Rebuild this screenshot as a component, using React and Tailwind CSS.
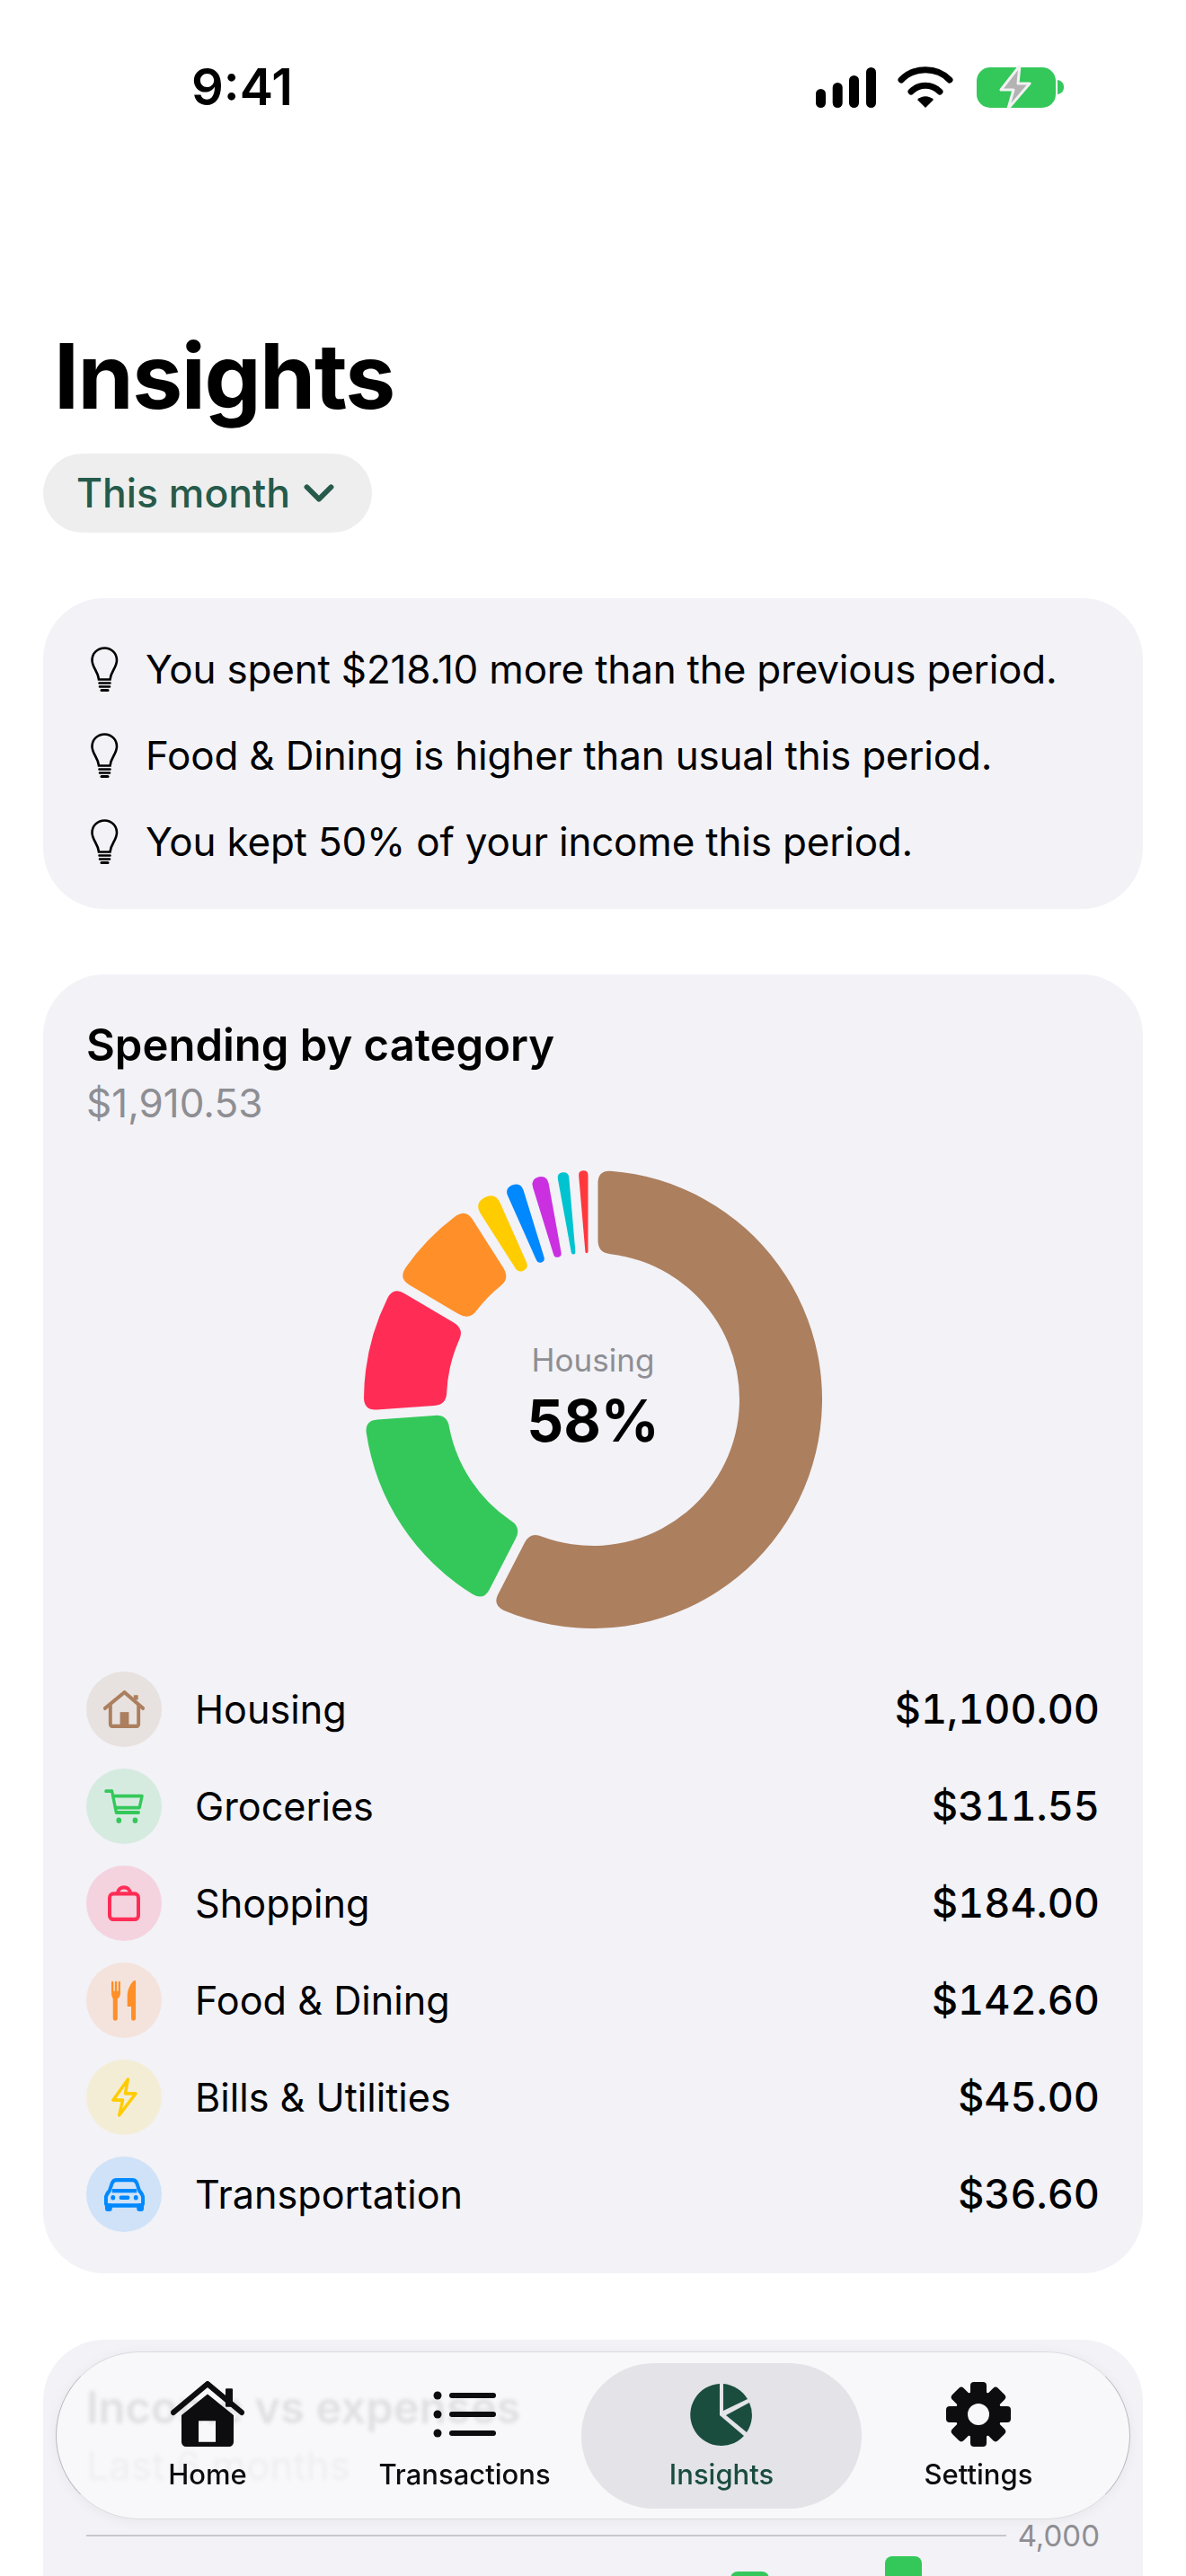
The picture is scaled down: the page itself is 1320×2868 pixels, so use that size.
import React from 'react';
import { ChevronDown } from 'lucide-react';

const font = { fontFamily: 'Inter, "Liberation Sans", sans-serif' };

// clockwise degrees from the top, one slice per category
const slices = [
  { color: '#ac7f5e', value: 1100 },
  { color: '#34c85a', value: 311.55 },
  { color: '#ff2d55', value: 184 },
  { color: '#ff8f28', value: 142.6 },
  { color: '#ffcc00', value: 45 },
  { color: '#0088ff', value: 36.6 },
  { color: '#cb30e0', value: 36 },
  { color: '#00c3d0', value: 28.78 },
  { color: '#ff383c', value: 26 },
];

const categories = [
  { name: 'Housing', amount: '$1,100.00', bg: '#e7e2df', color: '#ac7f5e', icon: 'house' },
  { name: 'Groceries', amount: '$311.55', bg: '#d6ebe0', color: '#34c85a', icon: 'cart' },
  { name: 'Shopping', amount: '$184.00', bg: '#f4d3df', color: '#ff2d55', icon: 'bag' },
  { name: 'Food & Dining', amount: '$142.60', bg: '#f4e3dc', color: '#ff8f28', icon: 'fork' },
  { name: 'Bills & Utilities', amount: '$45.00', bg: '#f4edd6', color: '#ffcc00', icon: 'bolt' },
  { name: 'Transportation', amount: '$36.60', bg: '#cfe2f7', color: '#0088ff', icon: 'car' },
];

const tips = [
  'You spent $218.10 more than the previous period.',
  'Food & Dining is higher than usual this period.',
  'You kept 50% of your income this period.',
];

const R = 255;
const r = 163;
const C = 255;
const GAP = 11;

function pt(rad, deg) {
  const a = (deg * Math.PI) / 180;
  return [C + rad * Math.sin(a), C - rad * Math.cos(a)];
}
const f = (p) => p[0].toFixed(2) + ' ' + p[1].toFixed(2);

function slicePath(a0, a1) {
  const off = (rad) => (Math.asin(GAP / 2 / rad) * 180) / Math.PI;
  const o0 = a0 + off(R);
  const o1 = a1 - off(R);
  const i0 = a0 + off(r);
  const i1 = a1 - off(r);
  const widthOut = ((o1 - o0) * Math.PI * R) / 180;
  const widthIn = ((i1 - i0) * Math.PI * r) / 180;
  const cO = Math.min(14, widthOut / 2);
  const cI = Math.min(14, widthIn / 2);
  const dO = ((cO / R) * 180) / Math.PI;
  const dI = ((cI / r) * 180) / Math.PI;
  const big0 = o1 - o0 - 2 * dO > 180 ? 1 : 0;
  const big1 = i1 - i0 - 2 * dI > 180 ? 1 : 0;
  return [
    'M' + f(pt(R, o0 + dO)),
    `A${R} ${R} 0 ${big0} 1 ` + f(pt(R, o1 - dO)),
    'Q' + f(pt(R, o1)) + ' ' + f(pt(R - cO, a1 - off(R - cO))),
    'L' + f(pt(r + cI, a1 - off(r + cI))),
    'Q' + f(pt(r, i1)) + ' ' + f(pt(r, i1 - dI)),
    `A${r} ${r} 0 ${big1} 0 ` + f(pt(r, i0 + dI)),
    'Q' + f(pt(r, i0)) + ' ' + f(pt(r + cI, a0 + off(r + cI))),
    'L' + f(pt(R - cO, a0 + off(R - cO))),
    'Q' + f(pt(R, o0)) + ' ' + f(pt(R, o0 + dO)),
    'Z',
  ].join(' ');
}

function Donut() {
  const total = slices.reduce((s, x) => s + x.value, 0);
  let at = 0;
  return (
    <svg width="510" height="510" viewBox="0 0 510 510">
      {slices.map((s) => {
        const a0 = at;
        at += (s.value / total) * 360;
        return <path key={s.color} d={slicePath(a0, at)} fill={s.color} />;
      })}
    </svg>
  );
}

function Bulb() {
  return (
    <svg width="31" height="50" viewBox="0 0 31 50" fill="none" stroke="#000" strokeWidth="2.6" strokeLinecap="round" className="shrink-0">
      <path d="M15.500 1.500C7.500 1.500 1.500 7.500 1.500 15c0 4 1.500 7 3.500 10.500 2 3.500 3.500 7 4 11h12.500c.5-4 2-7.500 4-11 2-3.500 3.500-6.500 3.500-10.500 0-7.500-6-13.500-13.500-13.500z" />
      <path d="M9.500 40.500h12M10 44.500h11" />
      <path d="M12 48.500h7" strokeWidth="3" />
    </svg>
  );
}

function CategoryIcon({ type, color }) {
  if (type === 'house')
    return (
      <svg width="47" height="42" viewBox="0 0 48 40" preserveAspectRatio="none" fill="none" stroke={color} strokeWidth="4" strokeLinecap="round" strokeLinejoin="round">
        <path d="M2 19 24 2l21 17" />
        <path d="M8 16v20a2 2 0 0 0 2 2h28a2 2 0 0 0 2-2V16" />
        <path d="M37 10V5" strokeWidth="5" strokeLinecap="butt" />
        <rect x="19" y="23" width="10" height="15" fill={color} stroke="none" />
      </svg>
    );
  if (type === 'cart')
    return (
      <svg width="44" height="39" viewBox="0 0 46 36" preserveAspectRatio="none" fill="none" stroke={color} strokeWidth="3.5" strokeLinecap="round" strokeLinejoin="round">
        <path d="M2 2h7l5 22h26" />
        <path d="M10 7h34l-3 12H13" />
        <circle cx="17" cy="32" r="3" fill={color} stroke="none" />
        <circle cx="36" cy="32" r="3" fill={color} stroke="none" />
      </svg>
    );
  if (type === 'bag')
    return (
      <svg width="36" height="40" viewBox="0 0 36 38" preserveAspectRatio="none" fill="none" stroke={color} strokeWidth="4" strokeLinejoin="round">
        <rect x="2" y="9" width="32" height="27" rx="4" />
        <path d="M11 9c0-9 14-9 14 0" />
      </svg>
    );
  if (type === 'fork')
    return (
      <svg width="28" height="45" viewBox="0 0 30 42" preserveAspectRatio="none" fill={color}>
        <path d="M0 2a1.2 1.2 0 0 1 2.5 0v9h1.6V2a1.2 1.2 0 0 1 2.5 0v9h1.6V2a1.2 1.2 0 0 1 2.5 0v11c0 3-1.500 5-3.400 6v20a2.700 2.700 0 0 1-5.400 0V19C1.500 18 0 16 0 13z" />
        <path d="M29 1v38a2.700 2.700 0 0 1-5.400 0V27H19V16C19 9 23 3 27 0c1-.6 2 0 2 1z" />
      </svg>
    );
  if (type === 'bolt')
    return (
      <svg width="29" height="44" viewBox="0 0 30 42" preserveAspectRatio="none" fill="none" stroke={color} strokeWidth="3.5" strokeLinejoin="round" strokeLinecap="round">
        <path d="M19 2 2 24h11L9 40l19-23H16z" />
      </svg>
    );
  return (
    <svg width="47" height="37" viewBox="0 0 48 34" preserveAspectRatio="none" fill="none">
      <path d="M3 20c0-3 2-5 4-7l3-8c1-2 3-3 5-3h18c2 0 4 1 5 3l3 8c2 2 4 4 4 7v6a2 2 0 0 1-2 2H5a2 2 0 0 1-2-2z" stroke={color} strokeWidth="4" />
      <path d="M10 13h28" stroke={color} strokeWidth="4" />
      <rect x="2" y="26" width="8" height="8" rx="3" fill={color} />
      <rect x="38" y="26" width="8" height="8" rx="3" fill={color} />
      <circle cx="11" cy="20" r="2.5" fill={color} />
      <circle cx="37" cy="20" r="2.5" fill={color} />
      <rect x="18" y="18" width="12" height="4" rx="2" fill={color} />
    </svg>
  );
}

function StatusIcons() {
  return (
    <div className="flex items-center">
      <svg width="67" height="45" viewBox="0 0 67 45" fill="#000">
        <rect x="0" y="24" width="11" height="21" rx="5.500" />
        <rect x="18.700" y="17" width="11" height="28" rx="5.500" />
        <rect x="37" y="9" width="11" height="36" rx="5.500" />
        <rect x="56" y="0" width="11" height="45" rx="5.500" />
      </svg>
      <svg width="62" height="46" viewBox="0 0 62 46" className="ml-[24px]" fill="none" stroke="#000" strokeWidth="7" strokeLinecap="round">
        <path d="M4 15C18 0 44 0 58 15" />
        <path d="M15 28c9-9 23-9 32 0" />
        <path d="M22 37 31 46 40 37C35 32 27 32 22 37z" fill="#000" stroke="none" />
      </svg>
      <svg width="97" height="48" viewBox="0 0 97 48" className="ml-[26px]" fill="none">
        <rect x="0" y="2" width="88" height="45" rx="15" fill="#34c85a" />
        <path d="M90 16c5 1 7 4 7 8s-2 7-7 8z" fill="#34c85a" />
        <path d="M48 0 27 27h14l-6 21 24-28H46z" fill="#b3b3b3" stroke="#f2f2f2" strokeWidth="3" strokeLinejoin="round" />
      </svg>
    </div>
  );
}

function NavHome() {
  return (
    <svg width="82" height="74" viewBox="0 0 82 72" preserveAspectRatio="none" fill="#0d0d0f">
      <path d="M3 34 41 3l38 31" fill="none" stroke="#0d0d0f" strokeWidth="6" strokeLinecap="round" strokeLinejoin="round" />
      <rect x="61" y="8" width="8" height="20" rx="1" />
      <path fillRule="evenodd" d="M41 14 12 37v29a5 5 0 0 0 5 5h48a5 5 0 0 0 5-5V37zM31 43v23h19V43z" />
    </svg>
  );
}

function NavList() {
  return (
    <svg width="70" height="54" viewBox="0 0 70 54" fill="#0d0d0f">
      <circle cx="5" cy="6" r="4.500" />
      <circle cx="5" cy="27" r="4.500" />
      <circle cx="5" cy="48" r="4.500" />
      <rect x="18" y="3" width="52" height="6" rx="3" />
      <rect x="18" y="24" width="52" height="6" rx="3" />
      <rect x="18" y="45" width="52" height="6" rx="3" />
    </svg>
  );
}

function NavPie() {
  return (
    <svg width="70" height="70" viewBox="0 0 70 70" fill="#1a4d3e">
      <path d="M33 1A34.500 34.500 0 1 0 60 59L33 36z" />
      <path d="M37 1c11 1 21 7 27 17L37 31z" />
      <path d="M66 22a34 34 0 0 1-3 33L40 36z" />
    </svg>
  );
}

function NavGear() {
  const teeth = [0, 45, 90, 135, 180, 225, 270, 315];
  return (
    <svg width="72" height="72" viewBox="0 0 72 72" fill="#0d0d0f">
      {teeth.map((t) => (
        <rect key={t} x="27" y="0" width="18" height="20" rx="4" transform={`rotate(${t} 36 36)`} />
      ))}
      <path fillRule="evenodd" d="M36 10a26 26 0 1 0 0 52 26 26 0 0 0 0-52zm0 14a12 12 0 1 1 0 24 12 12 0 0 1 0-24z" />
    </svg>
  );
}

const navItems = [
  { label: 'Home', icon: <NavHome /> },
  { label: 'Transactions', icon: <NavList /> },
  { label: 'Insights', icon: <NavPie />, active: true },
  { label: 'Settings', icon: <NavGear /> },
];

export default function App() {
  return (
    <div style={font} className="relative w-[1320px] h-[2868px] overflow-hidden bg-white text-black">
      <div className="flex items-center justify-between h-[60px] mt-[67px] pl-[213px] pr-[136px]">
        <span className="text-[56px] font-semibold leading-none">9:41</span>
        <StatusIcons />
      </div>

      <div className="px-[48px]">
        <h1 className="mt-[234px] ml-[12px] text-[100px] leading-[116px] font-bold tracking-[-1.5px]">Insights</h1>
        <button className="mt-[28px] flex items-center gap-[5px] h-[88px] w-[366px] pl-[37px] rounded-[44px] bg-[#eeeeee] text-[#265a4a] text-[44.500px] font-medium">
          This month
          <ChevronDown size={54} strokeWidth={2.600} />
        </button>

        <section className="mt-[73px] h-[346px] rounded-[68px] bg-[#f2f2f7] pl-[53px] pt-[55px] flex flex-col">
          {tips.map((t) => (
            <div key={t} className="flex items-center gap-[30px] h-[48px] mb-[48px] last:mb-0">
              <Bulb />
              <p className="text-[44px] leading-[48px] tracking-[-0.2px]">{t}</p>
            </div>
          ))}
        </section>

        <section className="mt-[73px] h-[1446px] rounded-[68px] bg-[#f2f2f7] px-[48px] pt-[49px]">
          <h2 className="text-[49px] leading-[60px] font-semibold">Spending by category</h2>
          <p className="mt-[4px] text-[44px] leading-[60px] text-[#8e8e93]">$1,910.53</p>
          <div className="relative mx-auto mt-[45px] w-[510px] h-[510px]">
            <Donut />
            <div className="absolute inset-0 flex flex-col items-center justify-center">
              <span className="text-[35px] leading-[44px] text-[#8e8e93]">Housing</span>
              <span className="mt-[4px] text-[64px] leading-[84px] font-bold">58%</span>
            </div>
          </div>
          <div className="mt-[48px] flex flex-col gap-[24px]">
            {categories.map((c) => (
              <div key={c.name} className="flex items-center h-[84px]">
                <div style={{ backgroundColor: c.bg }} className="flex items-center justify-center w-[84px] h-[84px] rounded-full">
                  <CategoryIcon type={c.icon} color={c.color} />
                </div>
                <span className="ml-[37px] flex-1 text-[43.200px]">{c.name}</span>
                <span className="text-[45px] font-medium tabular-nums">{c.amount}</span>
              </div>
            ))}
          </div>
        </section>

        <section className="mt-[74px] h-[400px] rounded-[68px] bg-[#f2f2f7] px-[48px] pt-[46px]">
          <h2 className="text-[49px] leading-[60px] font-semibold">Income vs expenses</h2>
          <p className="mt-[4px] text-[44px] leading-[60px] text-[#8e8e93]">Last 6 months</p>
          <div className="mt-[26px] flex items-center gap-[13px]">
            <div className="flex-1 h-[2px] bg-[#c7c7cc]" />
            <span className="text-[33px] leading-[44px] text-[#8e8e93]">4,000</span>
          </div>
          <div className="relative">
            <div className="absolute left-[717px] top-[18px] w-[43px] h-[60px] rounded-t-[8px] bg-[#34c85a]" />
            <div className="absolute left-[889px] top-[1px] w-[41px] h-[60px] rounded-t-[8px] bg-[#34c85a]" />
          </div>
        </section>
      </div>

      <nav className="absolute left-[62px] top-[2618px] w-[1196px] h-[187px] rounded-[94px] bg-[#f8f8fb]/90 backdrop-blur-[2px] border-[1.500px] border-[#b8b8bd] border-t-[#dcdce0] border-b-[#dcdce0] shadow-[0_2px_14px_rgba(0,0,0,0.05)] flex items-center pl-[25px]">
        {navItems.map((n) => (
          <div
            key={n.label}
            className={`h-[162px] rounded-[81px] flex flex-col items-center justify-end pb-[20px] ${n.active ? 'w-[312px] -mx-[13px] bg-[#e3e3e8] text-[#1a4d3e]' : 'w-[286px] text-[#0d0d0f]'}`}
          >
            <div className="flex items-center justify-center h-[74px]">{n.icon}</div>
            <span className="mt-[12px] text-[31px] leading-[36px] font-medium">{n.label}</span>
          </div>
        ))}
      </nav>
    </div>
  );
}
